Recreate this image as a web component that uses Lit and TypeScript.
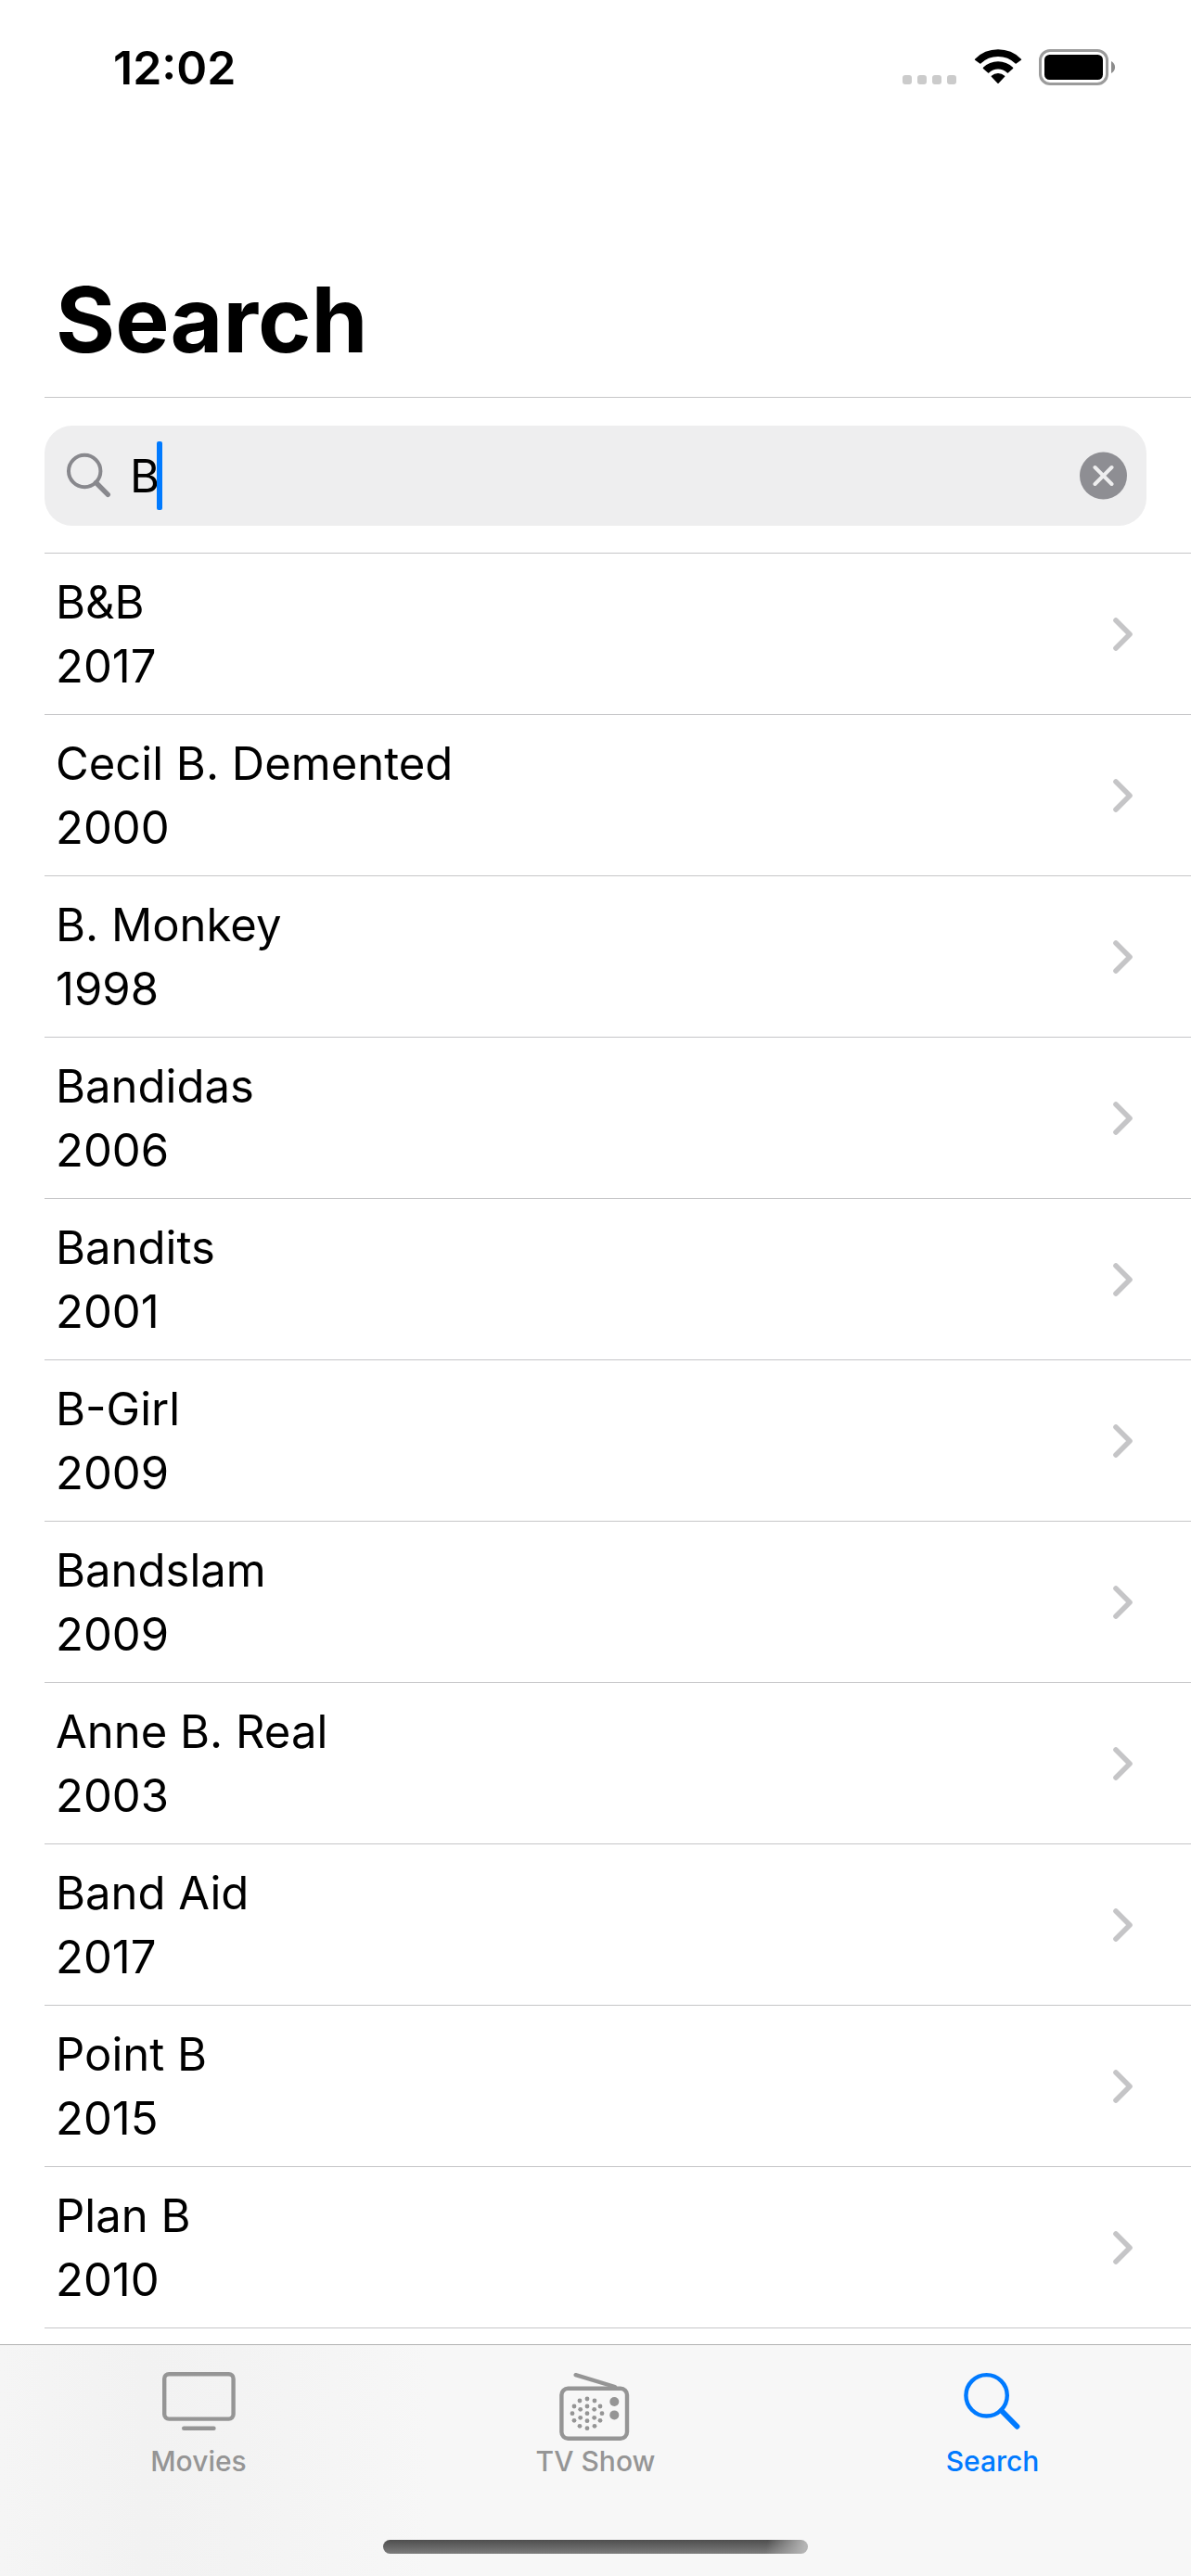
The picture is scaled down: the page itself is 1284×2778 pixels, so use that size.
import { LitElement, html, svg, css } from "lit";
import { customElement, state } from "lit/decorators.js";
import { classMap } from "lit/directives/class-map.js";

interface Movie {
  title: string;
  year: string;
}

const MOVIES: Movie[] = [
  { title: "B&B", year: "2017" },
  { title: "Cecil B. Demented", year: "2000" },
  { title: "B. Monkey", year: "1998" },
  { title: "Bandidas", year: "2006" },
  { title: "Bandits", year: "2001" },
  { title: "B-Girl", year: "2009" },
  { title: "Bandslam", year: "2009" },
  { title: "Anne B. Real", year: "2003" },
  { title: "Band Aid", year: "2017" },
  { title: "Point B", year: "2015" },
  { title: "Plan B", year: "2010" },
];

// Speaker grille of the radio icon: dot centres.
const GRILLE = [
  [39, 33], [31, 35], [47, 35], [25, 41], [39, 41], [53, 41],
  [31.7, 44.3], [46.7, 44.3], [23, 48.7], [39, 48.7], [55, 48.7],
  [31.7, 53.3], [46.7, 53.3], [25, 56.3], [39, 56.7], [53, 56.3],
  [31, 62.3], [47, 62.3], [39, 64.7],
];

const tvIcon = svg`
  <rect x="11.2" y="6.2" width="74.4" height="48.4" rx="5" fill="none" stroke="currentColor" stroke-width="4.4"/>
  <path d="M32.2 64.7H64.5" stroke="currentColor" stroke-width="4.4" stroke-linecap="round"/>`;

const radioIcon = svg`
  <rect x="11.4" y="21.8" width="70.6" height="54" rx="7" fill="none" stroke="currentColor" stroke-width="4.4"/>
  <path d="M26.6 7.2L69 20" stroke="currentColor" stroke-width="4.4" stroke-linecap="round"/>
  ${GRILLE.map(([x, y]) => svg`<circle cx=${x} cy=${y} r="2.4" fill="currentColor"/>`)}
  <circle cx="68.3" cy="36" r="5" fill="currentColor"/>
  <circle cx="68.3" cy="50.4" r="5" fill="currentColor"/>`;

const searchIcon = svg`
  <circle cx="41.6" cy="29.3" r="22.2" fill="none" stroke="currentColor" stroke-width="4.4"/>
  <path d="M57.5 45.5L74.5 62.8" stroke="currentColor" stroke-width="5.8" stroke-linecap="round"/>`;

const TABS = [
  { label: "Movies", icon: tvIcon },
  { label: "TV Show", icon: radioIcon },
  { label: "Search", icon: searchIcon },
];

@customElement("app-root")
export class AppRoot extends LitElement {
  @state() private query = "B";
  @state() private tab = "Search";

  static styles = css`
    :host {
      display: block;
      font-family: Inter, "Liberation Sans", sans-serif;
      color: #000;
    }
    * {
      box-sizing: border-box;
    }
    svg {
      display: block;
      flex: none;
    }
    .screen {
      display: flex;
      flex-direction: column;
      height: 100vh;
      background: #fff;
    }
    .status {
      display: flex;
      justify-content: space-between;
      align-items: flex-start;
      padding: 43px 80px 0 122px;
    }
    .time {
      font-size: 50px;
      line-height: 60px;
      font-weight: 600;
    }
    .indicators {
      display: flex;
      align-items: center;
      gap: 18px;
      padding-top: 10px;
    }
    .content {
      flex: 1;
      min-height: 0;
      overflow: hidden;
      padding: 182px 0 0 48px;
    }
    .title {
      margin: 0;
      padding: 0 12px 23px;
      font-size: 98px;
      line-height: 120px;
      font-weight: 700;
      border-bottom: 1px solid #c6c6c8;
    }
    .searchrow {
      padding: 30px 48px 29px 0;
      border-bottom: 1px solid #c6c6c8;
    }
    .searchbox {
      display: flex;
      align-items: center;
      height: 108px;
      padding: 0 20px 0 22px;
      border-radius: 30px;
      background: #eeeeef;
    }
    .glass {
      color: #88888d;
    }
    .field {
      position: relative;
      flex: 1;
      padding-left: 18px;
    }
    .input {
      display: block;
      width: 100%;
      height: 74px;
      padding: 0;
      border: 0;
      outline: 0;
      background: transparent;
      font: inherit;
      font-size: 49px;
      color: #000;
      caret-color: transparent;
    }
    .caret {
      position: absolute;
      top: 0;
      left: 47px;
      width: 6px;
      height: 74px;
      border-radius: 2px;
      background: #007aff;
    }
    .clear {
      padding: 0;
      border: 0;
      background: none;
      color: #8e8e93;
    }
    .list {
      margin: 0;
      padding: 0;
      list-style: none;
    }
    .row {
      display: flex;
      align-items: center;
      justify-content: space-between;
      padding: 18px 62px 17px 12px;
      border-bottom: 1px solid #c6c6c8;
      color: inherit;
      text-decoration: none;
      font-size: 49px;
      line-height: 69px;
    }
    .text {
      display: block;
    }
    .tabbar {
      display: flex;
      flex-direction: column;
      align-items: center;
      justify-content: space-between;
      height: 250px;
      padding-bottom: 24px;
      border-top: 1px solid #b2b2b2;
      background: linear-gradient(90deg, #f5f5f5, #f2f2f2 12%, #f3f3f3 20%, #f7f7f7 36%, #f7f7f7);
    }
    .tabs {
      display: grid;
      grid-template-columns: repeat(3, 1fr);
      width: 100%;
    }
    .tab {
      display: flex;
      flex-direction: column;
      align-items: center;
      padding: 25px 0 0;
      border: 0;
      background: none;
      font: inherit;
      font-size: 30px;
      line-height: 36px;
      font-weight: 500;
      color: #959595;
    }
    .tab.active {
      color: #007aff;
    }
    .home {
      width: 458px;
      height: 15px;
      border-radius: 8px;
      background:
        linear-gradient(100deg, transparent 90%, #b4b4b4 99%),
        linear-gradient(#4e4e4e, #7c7c7c);
    }
  `;

  render() {
    return html`
      <div class="screen">
        <header class="status">
          <span class="time">12:02</span>
          <div class="indicators">
            <svg width="60" height="40" viewBox="0 0 60 40" aria-hidden="true">
              ${[1, 17, 33, 49].map(
                (x) => svg`<rect x=${x} y="28" width="10" height="10" rx="3" fill="#cbcbcb"/>`
              )}
            </svg>
            <svg width="52" height="40" viewBox="0 0 52 40" aria-hidden="true">
              <g stroke="#000" stroke-width="1.6" stroke-linejoin="round">
                <path d="M1.6 11.2A34.7 34.7 0 0 1 50.4 11.2L45.2 14.9A27.8 27.8 0 0 0 6.8 14.9Z"/>
                <path d="M10.5 20.4A22.2 22.2 0 0 1 41.5 20.4L36.4 24.8A15.4 15.4 0 0 0 15.6 24.8Z"/>
                <path d="M19.4 29.3A10 10 0 0 1 32.6 29.3L26 36.2Z"/>
              </g>
            </svg>
            <svg width="84" height="40" viewBox="0 0 84 40" aria-hidden="true">
              <rect x="1.5" y="1.5" width="72" height="36" rx="10.5" fill="none" stroke="#9b9b9b" stroke-width="3"/>
              <rect x="6" y="6" width="63" height="27" rx="5.5"/>
              <path d="M78 13C83.4 15.5 83.4 23.5 78 26Z" fill="#8c8c8c"/>
            </svg>
          </div>
        </header>

        <main class="content">
          <h1 class="title">Search</h1>
          <div class="searchrow">
            <div class="searchbox">
              <svg class="glass" width="52" height="52" viewBox="0 0 52 52" aria-hidden="true">
                <circle cx="21.2" cy="21" r="17.2" fill="none" stroke="currentColor" stroke-width="4"/>
                <path d="M33.5 33.5L46.3 46.3" stroke="currentColor" stroke-width="5.4" stroke-linecap="round"/>
              </svg>
              <div class="field">
                <input
                  class="input"
                  type="text"
                  aria-label="Search"
                  .value=${this.query}
                  @input=${(e: Event) => (this.query = (e.target as HTMLInputElement).value)}
                />
                ${this.query === "B" ? html`<span class="caret"></span>` : null}
              </div>
              <button class="clear" aria-label="Clear text" @click=${() => (this.query = "")}>
                <svg width="52" height="52" viewBox="0 0 52 52" aria-hidden="true">
                  <circle cx="25.5" cy="26" r="25.5" fill="currentColor"/>
                  <path d="M16.5 17L34.5 35M34.5 17L16.5 35" stroke="#eeeeef" stroke-width="4" stroke-linecap="round"/>
                </svg>
              </button>
            </div>
          </div>
          <ul class="list">
            ${MOVIES.map(
              (m) => html`<li>
                <a class="row" href="#">
                  <span>
                    <span class="text">${m.title}</span>
                    <span class="text">${m.year}</span>
                  </span>
                  <svg width="26" height="40" viewBox="0 0 26 40" aria-hidden="true">
                    <path d="M7 5L22 20L7 35" fill="none" stroke="#c5c5c7" stroke-width="5.6" stroke-linecap="round" stroke-linejoin="round"/>
                  </svg>
                </a>
              </li>`
            )}
          </ul>
        </main>

        <footer class="tabbar">
          <nav class="tabs">
            ${TABS.map(
              (t) => html`<button
                class=${classMap({ tab: true, active: t.label === this.tab })}
                @click=${() => (this.tab = t.label)}
              >
                <svg width="96" height="82" viewBox="0 0 96 82" aria-hidden="true">${t.icon}</svg>
                <span>${t.label}</span>
              </button>`
            )}
          </nav>
          <div class="home"></div>
        </footer>
      </div>
    `;
  }
}
